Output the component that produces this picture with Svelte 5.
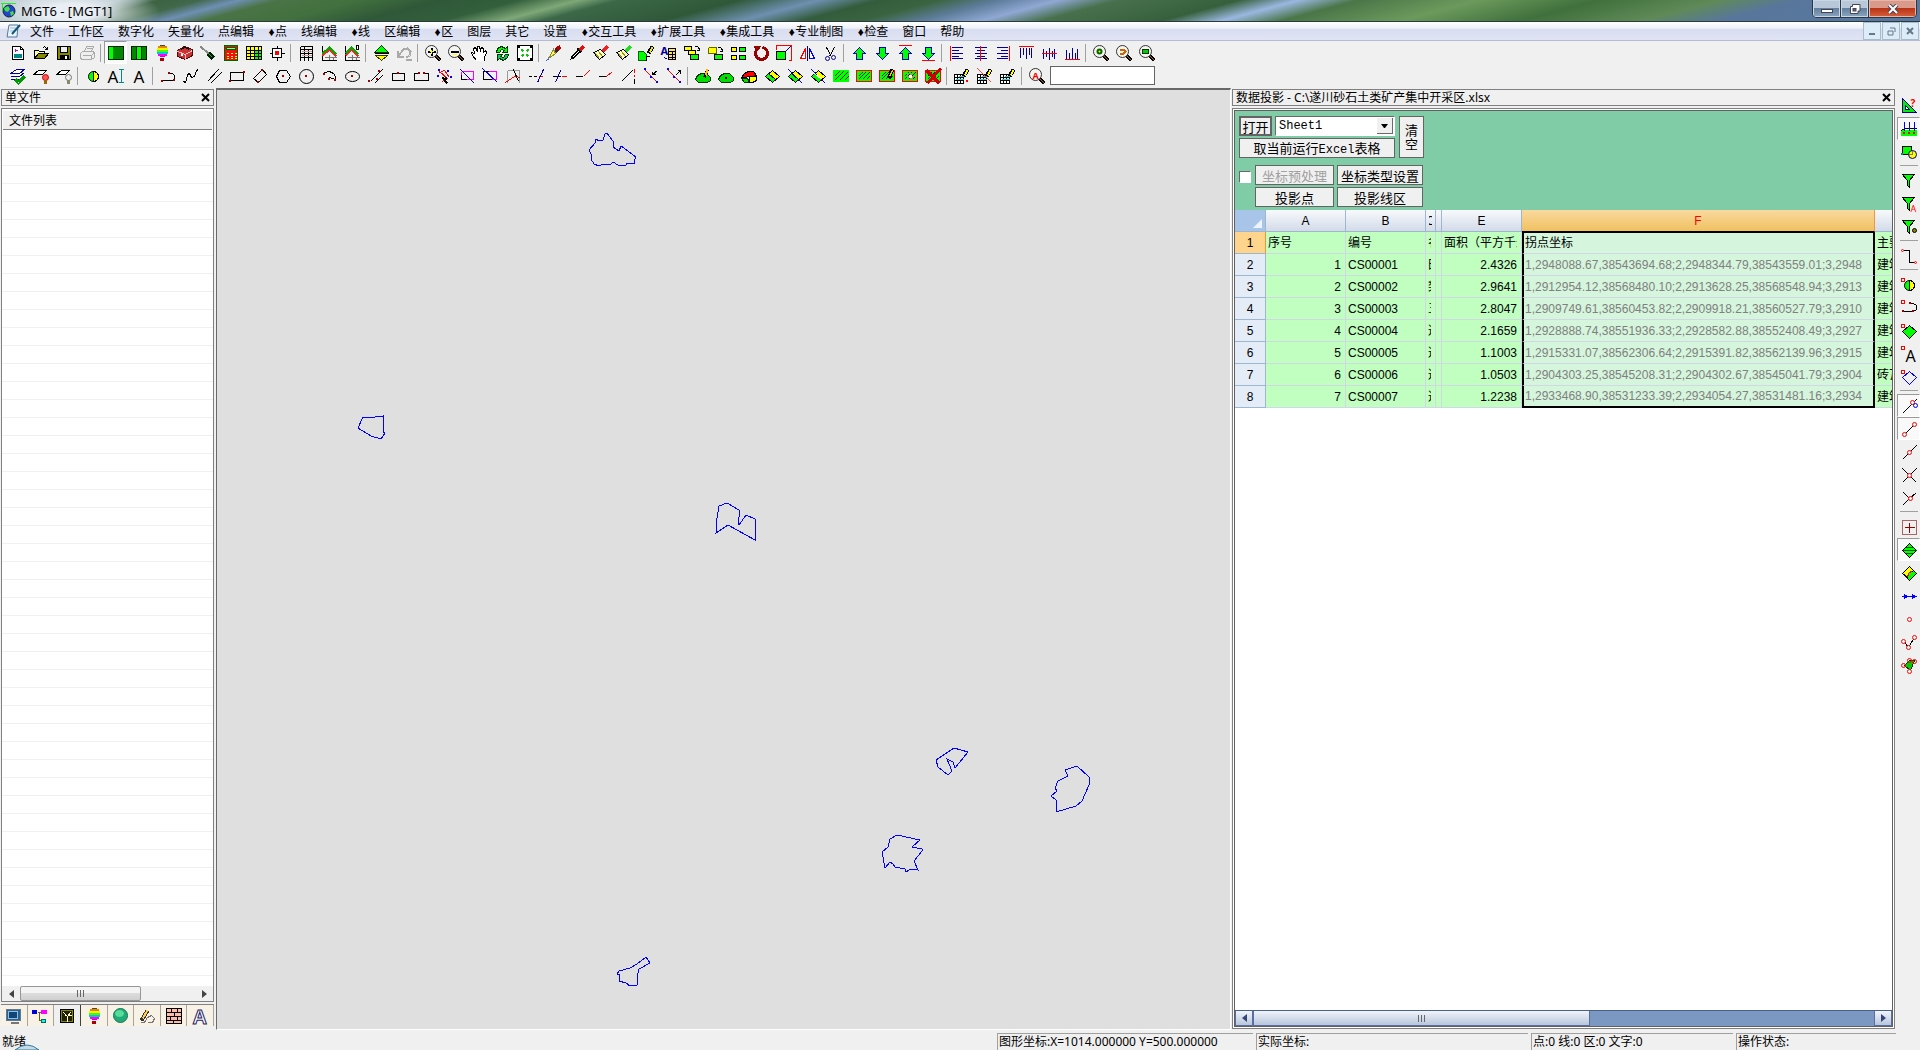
<script>
  const menus = [
    '文件', '工作区', '数字化', '矢量化', '点编辑', '♦点', '线编辑', '♦线', '区编辑', '♦区',
    '图层', '其它', '设置', '♦交互工具', '♦扩展工具', '♦集成工具', '♦专业制图', '♦检查', '窗口', '帮助',
  ];

  // small drawing helpers, every icon sits on a 16x16 pixel grid
  const p = (d, stroke = '#000', fill = 'none', w = 1) =>
    `<path d="${d}" stroke="${stroke}" fill="${fill}" stroke-width="${w}"/>`;
  const r = (x, y, w, h, fill, stroke = fill) =>
    `<rect x="${x}" y="${y}" width="${w}" height="${h}" fill="${fill}" stroke="${stroke}"/>`;
  const c = (x, y, rad, fill = 'none', stroke = '#000', w = 1) =>
    `<circle cx="${x}" cy="${y}" r="${rad}" fill="${fill}" stroke="${stroke}" stroke-width="${w}" shape-rendering="auto"/>`;
  const e = (x, y, rx, ry, fill = 'none', stroke = '#000') =>
    `<ellipse cx="${x}" cy="${y}" rx="${rx}" ry="${ry}" fill="${fill}" stroke="${stroke}" shape-rendering="auto"/>`;
  const t = (x, y, size, s, fill = '#000', weight = 400) =>
    `<text x="${x}" y="${y}" font-size="${size}" font-weight="${weight}" fill="${fill}" font-family="Noto Sans, sans-serif">${s}</text>`;
  const dot = (x, y, col = '#900') => r(x, y, 1, 1, col);
  const node = (x, y) => c(x, y, 2, '#fff', '#f00');

  const lens = p('M10 10L15 15', '#000', 'none', 4) + p('M10 10L15 15', '#a60', 'none', 1) + c(6, 6, 6, '#f4f4f0', '#333');
  const region = r(0, 2, 15, 11, '#0f0') + p('M1 8L6 3M1 12L10 3M6 12L14 4M11 12L15 8', '#030');
  const regionRed = r(0, 2, 15, 11, '#0f0', '#f00') + p('M2 8L6 4M2 11L9 4M6 11L13 4M10 11L13 8', '#030');
  const diamond = p('M1 8L8 1L15 8L8 15Z', '#000', '#0f0');
  const halfDiamond = p('M1 8L8 2L15 8L8 14Z', '#000', '#ff0') + p('M1 8L4 5L11 11L8 14Z', '#000', '#0f0');
  const blob = p('M0 11L2 7L6 5H11L15 9V12L12 14H3Z', '#030', '#0d0');
  const sheet = r(0, 6, 9, 9, '#fff', '#000') + p('M0 9H9M0 12H9M3 6V15M6 6V15') + p('M1 11H9M4 8H9', '#3cc');
  const pencil = p('M9 8L13 1', '#000', 'none', 4) + p('M10 7L13 2', '#ff0', 'none', 2);
  const funnel = p('M1 1H13L8 7V14L6 12V7Z', '#000', '#0f0');
  const brush = (col) => p('M10 6L15 1', col, 'none', 4) + p('M1 7L8 4L13 9L7 14Z', '#000', '#ffc') + p('M3 8L7 13M6 6L10 11', '#990');
  const up = p('M8 2L14 8H11V14H5V8H2Z', '#00c', '#0f0');
  const down = p('M8 14L14 8H11V2H5V8H2Z', '#00c', '#0f0');
  const balloon =
    p('M5 0H10', '#444') + p('M3 1.5H12', '#d80', 'none', 2) + p('M2 3.5H13', '#fe0', 'none', 2) +
    p('M2 5.5H13', '#4f0', 'none', 2) + p('M2 7.5H13', '#0cc', 'none', 2) + p('M3 9.5H12', '#f0f', 'none', 2) +
    p('M5 11H10', '#c0c') + r(6, 13, 3, 2, '#a00');

  const icons = {
    new: p('M2 1H10L13 4V14H2Z', '#000', '#fff') + r(4, 9, 7, 3, '#088') + p('M5 3V6M4 5H7', '#c0c') + p('M10 1V4H13'),
    open: p('M1 13V5H5L6 6H11V8', '#000', '#ffa') + p('M1 13L5 8H15L11 13Z', '#000', '#880') + p('M9 3L11 1L14 4M14 1V4H11'),
    save: r(1, 1, 13, 13, '#880', '#000') + r(4, 1, 7, 6, '#eee', '#000') + r(4, 10, 8, 4, '#000') + r(9, 11, 1, 2, '#fff'),
    print: p('M5 6L7 1H14L12 6M1 8L3 6H14L15 8V12L12 14H2L1 12ZM3 10H12M12 14V10L15 7M7 3H12', '#aaa', '#eee'),
    split1: r(0, 1, 15, 13, '#080', '#020') + r(1, 2, 3, 11, '#0f0'),
    split2: r(0, 1, 15, 13, '#080', '#020') + r(6, 2, 3, 11, '#0f0') + p('M5 1V14M10 1V14', '#020'),
    balloon,
    toolbox: p('M0 5L7 1L15 4V10L8 14L0 11Z', '#411', '#c33') + p('M0 6L8 9L15 5M8 9V14', '#fbb') + p('M4 4L7 2L12 4', '#000') + r(4, 9, 1, 1, '#fff'),
    driver: p('M0 1L8 8', '#888', 'none', 2) + p('M8 8L13 13', '#020', 'none', 5) + p('M8 8L12 12', '#394', 'none', 1),
    calc: r(1, 0, 13, 15, '#e11', '#060') + r(3, 2, 9, 2, '#8f8', '#060') + p('M3 8H5M7 8H9M11 8H13M3 11H5M7 11H9M11 11H13M3 13H5M7 13H9M11 13H13', '#ff0'),
    table: r(0, 1, 15, 13, '#ff0', '#000') + r(8, 5, 7, 9, '#0f0', '#000') + p('M0 5H15M0 8H15M0 11H15M4 1V14M8 1V14M12 1V14'),
    target: r(3, 3, 9, 9, '#fff', '#000') + r(6, 6, 3, 3, '#f00') + p('M8 0V3M8 12V15M0 8H3M12 8H15'),
    rows: p('M2 1V15M6 1V15M14 1V15M2 1H14M2 4H14M2 8H14M2 12H14M10 4V15', '#000') + p('M3 6H13M3 10H13', '#c99'),
    chart1: p('M1 0V15M1 15H15') + p('M3 12H15M8 9V14M12 12V14', '#777') + p('M1 10L8 4L15 11', '#f22', 'none', 2) + p('M1 8L8 2L15 9', '#0a0', 'none', 2),
    chart2: p('M1 0V15M1 15H15') + p('M3 12H15M8 9V14M12 12V14', '#777') + p('M1 10L7 4L14 11', '#f22', 'none', 2) + p('M1 8L7 2L14 9', '#0a0', 'none', 2) + r(12, 0, 2, 4, '#fff', '#000'),
    updown: p('M1 7L8 0L15 7Z', '#030', '#0f0') + p('M2 10L8 15L14 10Z', '#330', '#ff0') + p('M1 8H15'),
    undo: p('M1 5V11H7M2 10L7 4L11 3L14 6L13 10L10 12M9 14H15', '#aaa', 'none', 2),
    zoomin: lens + p('M6 2V10M2 6H10', '#000', 'none', 2) + p('M6 4V8M4 6H8', '#ff0'),
    zoomout: lens + p('M2 6H10', '#000', 'none', 2) + p('M4 9H8', '#ff0'),
    hand: p('M5 15L1 10L0 7L3 8L2 3L4 2L6 6L6 1H8L9 5L10 2L12 3V7L14 5L15 7L13 12V15', '#000', '#fff'),
    refresh: p('M2 7L3 3L7 1L11 3L13 1V7H8L10 5L7 4L5 7Z', '#030', '#0f0') + p('M14 9L13 12L9 15L5 13L3 15V9H8L6 11L9 12L11 9Z', '#030', '#0c6'),
    extent: r(0, 0, 15, 15, '#fff', '#000') + r(0, 0, 2, 2, '#000') + r(13, 0, 2, 2, '#000') + r(0, 13, 2, 2, '#000') + r(13, 13, 2, 2, '#000') + p('M4 4L6 6M11 4L9 6M4 11L6 9M11 11L9 9', '#0c0', 'none', 2),
    pen: p('M9 5L14 1', '#b00', 'none', 4) + p('M7 8L11 4', '#422', 'none', 3) + p('M2 13L7 4L9 8Z', '#884', '#ff3') + p('M0 15L3 13', '#26f'),
    picker: p('M2 13L9 6', '#000', 'none', 3) + p('M3 12L9 6', '#fff') + p('M8 3L12 7', '#000', 'none', 2) + p('M10 5L14 1', '#d11', 'none', 4) + p('M0 15L2 13'),
    brush1: brush('#e22'),
    brush2: brush('#2d2'),
    editarea: p('M0 6H5L8 9V15H0Z', '#060', '#0f0') + p('M10 8L14 1', '#000', 'none', 4) + p('M11 7L14 2', '#ee0', 'none', 2) + p('M8 15V11H11'),
    attr: t(-1, 9, 11, 'A', '#009', 700) + r(7, 3, 7, 11, '#fd6', '#000') + p('M7 6H14M7 9H14M7 12H14M11 6V14') + p('M3 12L6 14', '#009'),
    copy: r(0, 1, 7, 4, '#ff0', '#000') + r(4, 5, 7, 4, '#ff0', '#000') + r(6, 9, 8, 5, '#0f0', '#000') + p('M10 1H13L15 4M15 2V5H12', '#000'),
    move: r(1, 2, 8, 6, '#ff0', '#ff0') + p('M1 2H9M1 8H9M1 2V8M9 2V8', '#660') + r(7, 9, 8, 5, '#0f0', '#000') + p('M10 2H13L15 5M15 3V6H12'),
    tiles: r(1, 2, 5, 4, '#ff0', '#000') + r(9, 2, 6, 4, '#0f0', '#000') + r(1, 10, 5, 4, '#ff0', '#000') + r(9, 10, 6, 4, '#0f0', '#000'),
    rotate: `<circle cx="8" cy="8" r="6" fill="none" stroke="#900" stroke-width="3" stroke-dasharray="31 7" stroke-dashoffset="-2" transform="rotate(-100 8 8)"/>` + p('M1 1L7 1L3 6Z', '#900', '#900'),
    scale: p('M0 4V0H15V15H12', '#f00') + r(0, 6, 9, 8, '#0f0', '#000') + p('M9 6L14 1', '#009'),
    mirror: p('M6 3V13H1Z', '#f00', '#fff') + p('M8 0V15', '#009') + p('M10 3V13H15Z', '#00f', '#fff'),
    cut: p('M4 2L9 11M12 2L7 11') + c(5, 13, 2, 'none', '#009', 1) + c(11, 12, 2, 'none', '#009', 1),
    up, down,
    top: p('M1 0H14', '#f00') + up,
    bottom: down + p('M1 15H14', '#f00'),
    alignl: p('M1 0V15', '#f00') + p('M2 2H13M2 5H9M2 8H13M2 11H9M2 13H13', '#009'),
    alignc: p('M2 2H14M4 5H12M2 8H14M4 11H12M2 13H14', '#009') + p('M8 0V15', '#f00'),
    alignr: p('M1 2H12M5 5H12M1 8H12M5 11H12M1 13H12', '#009') + p('M14 0V15', '#f00'),
    alignt: p('M2 2V12M5 2V9M8 2V13M11 2V9M13 2V12', '#009') + p('M0 1H15', '#f00'),
    alignm: p('M2 3V13M5 5V11M8 2V14M11 5V11M13 3V13', '#009') + p('M0 8H15', '#f00'),
    alignb: p('M2 4V13M5 7V13M8 2V13M11 7V13M13 3V13', '#009') + p('M0 14H15', '#f00'),
    find1: lens + c(6, 6, 2, '#ff0', '#060', 2),
    find2: lens + p('M3 8H7L9 6L7 4H3', '#c60', 'none', 2),
    find3: lens + r(3, 4, 6, 4, '#0c0', '#030'),
    layers: p('M0 5L6 1H14L9 5ZM0 8L9 8L14 4M0 11L9 11L14 7', '#009', '#fff') + p('M5 11L8 14L14 8', '#090', 'none', 3),
    lampOn: p('M0 6L5 2H13L9 6Z', '#000', '#fff') + c(12, 9, 3, '#f55', '#c00') + r(11, 12, 2, 3, '#960'),
    lampOff: p('M0 6L5 2H13L9 6Z', '#000', '#fff') + c(12, 9, 3, '#eee', '#777') + r(11, 12, 2, 3, '#886'),
    pt: c(8, 8, 5, '#0f0') + p('M8 3A5 5 0 0 1 8 13Z', '#000', '#ff0'),
    textI: t(-1, 14, 17, 'A') + p('M10 1H15M13 1V14M10 14H15', '#088'),
    text: t(2, 14, 17, 'A'),
    line1: p('M1 12H12L14 10V7L12 5H8') + dot(1, 12) + dot(8, 4) + dot(13, 11),
    curve: p('M0 13L2 14L3 11L4 6L6 5L8 9L11 8L13 2L15 1'),
    parallel: p('M1 13L12 1M4 15L15 4'),
    rect: r(1, 4, 13, 8, 'none', '#000') + dot(0, 12) + dot(14, 3),
    rect2: p('M1 10L10 1L14 6L6 14Z') + dot(9, 1) + dot(5, 13),
    hexa: p('M4 2H11L15 8L11 14H4L1 8Z') + dot(7, 7),
    circ: c(8, 8, 7) + dot(7, 7),
    arc: p('M1 7L3 4L8 3L12 5L14 8V11L8 9') + dot(2, 5) + dot(7, 10) + dot(13, 11),
    ellip: e(8, 8, 7, 5) + dot(7, 7),
    par2: p('M3 13L15 1M7 15L15 7', '#000') + dot(1, 12) + dot(9, 10) + dot(11, 2),
    box1: r(2, 5, 12, 7, 'none', '#000') + dot(7, 4),
    box2: p('M6 5H1V12H15V5H10') + dot(5, 4) + dot(10, 4),
    snap: p('M3 4L8 2L13 9M3 3L11 10L6 13', '#f00') + r(2, 1, 1, 1, '#00f') + r(11, 2, 1, 1, '#00f') + r(1, 7, 1, 1, '#00f') + r(14, 8, 1, 1, '#00f') + p('M6 9L11 15M10 9L8 14', '#000', 'none', 2),
    clip1: p('M2 3H14V11H7M2 3V6', '#f0f') + p('M2 11V6M2 11H7', '#000') + p('M1 1L15 15', '#00c'),
    clip2: p('M14 3V11H9M6 3H14', '#f0f') + p('M6 3H1V11H9') + p('M0 0L15 14', '#00c'),
    trim: p('M2 2H14M2 2V14M14 2V14', '#999') + p('M0 14L9 8L15 9', '#f00') + p('M8 1L13 13'),
    ext1: p('M0 8H3M5 8H8', '#000') + p('M10 8H14', '#f00') + p('M15 1L9 14', '#009'),
    ext2: p('M1 8H9') + p('M10 8H15', '#f00') + p('M9 2L4 14', '#009'),
    bend1: p('M1 8H8') + p('M9 8L15 2', '#f00'),
    bend2: p('M1 8H8') + p('M9 8L15 3', '#f00'),
    corner: p('M1 13L12 2') + p('M14 0V4M14 6V8', '#f00') + p('M14 10V15'),
    node1: p('M1 1L14 14', '#f00') + r(1, 0, 1, 1, '#00f') + r(13, 13, 1, 1, '#00f') + r(7, 8, 1, 1, '#00f') + p('M14 2L9 6M9 3V6H12'),
    node2: p('M1 1L14 14', '#f00') + r(1, 0, 1, 1, '#00f') + r(13, 13, 1, 1, '#00f') + r(7, 8, 1, 1, '#00f') + p('M9 7L14 2M11 2H14V5'),
    blob1: blob + p('M9 9L12 1', '#000', 'none', 3) + p('M10 7L12 1', '#fb0', 'none', 2),
    blob2: blob + dot(7, 9, '#000'),
    blob3: p('M0 9L3 5L7 3H12L15 7L11 8Z', '#000', '#f00') + p('M0 10H6L8 14H3Z', '#030', '#0d0') + p('M8 8H15V12L11 14H8Z', '#000', '#ff0'),
    dia1: halfDiamond,
    dia2: halfDiamond + p('M1 1L15 15', '#00c'),
    dia3: halfDiamond + p('M1 1L15 15', '#00c') + p('M4 5L11 11', '#fff'),
    reg1: region,
    reg2: regionRed,
    reg3: regionRed + p('M9 10L13 1', '#000', 'none', 4) + p('M10 8L13 2', '#fb0', 'none', 1),
    reg4: regionRed + p('M4 8H13M8 4V12M5 5L11 11M11 5L5 11', '#f66') + r(7, 7, 2, 2, '#fff'),
    reg5: regionRed + p('M1 2L14 15M15 0L2 15', '#c00', 'none', 3),
    sheet1: sheet + pencil + r(12, 12, 1, 1, '#f00'),
    sheet2: sheet + pencil + p('M0 0L14 14', '#f44'),
    sheet3: sheet + pencil,
    findA: lens + t(3, 10, 9, 'A', '#f00', 700),
    tri: p('M1 0V14H15Z', '#009', '#0e0') + p('M4 7V11H8Z', '#009', '#fff') + t(9, 8, 10, '?', '#f00', 700),
    plumb: r(0, 9, 15, 5, '#0f0') + p('M0 9L3 7H15') + p('M3 0V9M8 0V9M13 0V9', '#00f', 'none', 1) + r(2, 11, 1, 1, '#fff', '#f00') + r(7, 11, 1, 1, '#fff', '#f00') + r(12, 11, 1, 1, '#fff', '#f00'),
    overlap: r(1, 2, 9, 8, '#0f0', '#000') + c(11, 10, 4, '#ff0', '#009') + r(0, 9, 1, 1, '#088') + p('M11 6V10H7', '#880'),
    funnel,
    funnelA: funnel + t(9, 15, 9, 'A', '#f00'),
    funnelP: funnel + c(13, 11, 2, '#880'),
    step: p('M2 2H8V14H14') + c(1, 2, 1, '#fff', '#f00') + c(14, 14, 1, '#fff', '#f00'),
    selPt: c(8, 8, 5, '#0f0') + p('M8 3A5 5 0 0 1 8 13Z', '#000', '#ff0') + r(0, 1, 3, 3, '#fff', '#f00'),
    selLine: r(0, 0, 3, 3, '#fff', '#f00') + p('M1 11H12L15 9V5L12 3H8') + dot(1, 10) + dot(8, 2) + dot(11, 10),
    selArea: p('M1 8L8 2L15 8L8 15Z', '#000', '#0f0') + r(0, 1, 3, 3, '#fff', '#f00'),
    selText: t(4, 15, 16, 'A') + r(0, 0, 3, 3, '#fff', '#f00'),
    selDia: p('M1 8L8 2L15 8L8 15Z', '#00f') + r(0, 1, 3, 3, '#fff', '#f00'),
    s1: p('M1 15L15 1') + node(11, 4) + c(14, 7, 2, 'none', '#00f'),
    s2: p('M3 13L13 3') + node(3, 13) + node(13, 3),
    s3: p('M1 15L15 1') + node(8, 8),
    s4: p('M1 1L15 15M15 1L1 15') + node(8, 8),
    s5: p('M2 2L8 8L15 2M8 8L1 15') + node(9, 8),
    grid: r(1, 1, 14, 14, 'none', '#a66') + p('M8 3V13M3 8H13', '#900'),
    areaOn: diamond + p('M4 5H12M1 8H15M4 11H12', '#050'),
    areaHalf: diamond + p('M1 8L8 1L12 5L7 8L6 12Z', '#000', '#ff0') + p('M11 5L7 8L6 12', '#f00'),
    arrows: p('M0 8H15', '#00f', 'none', 1) + p('M3 6L6 8L3 10ZM11 6L14 8L11 10Z', '#00f', '#00f'),
    single: c(8, 8, 2, '#fff', '#f00'),
    vee: p('M2 6L7 13L13 3') + node(2, 7) + node(7, 13) + node(13, 3),
    poly: p('M3 8L8 3H13L9 13Z', '#030', '#0c0') + c(2, 8, 2, 'none', '#f00') + c(8, 3, 2, 'none', '#f00') + c(13, 4, 2, 'none', '#f00') + c(8, 14, 2, '#fff', '#f00'),
    pc: r(0, 1, 14, 11, '#269', '#678') + r(2, 3, 9, 7, '#147', '#9bd') + r(5, 14, 7, 1, '#bbb', '#777'),
    tree: r(0, 2, 4, 3, '#00d') + r(9, 2, 5, 3, '#f0f') + r(9, 11, 4, 3, '#0ff', '#066') + p('M5 4H8M7 4V12H9', '#660'),
    map: r(1, 1, 13, 13, '#880', '#000') + r(3, 3, 9, 9, '#220') + p('M4 4L7 7M8 13V8L11 4M5 7H7M9 7H12', '#ffd', 'none', 1),
    ball: c(8, 7, 7, '#2a7', '#175') + e(7, 5, 4, 3, '#5d9', '#5d9'),
    draw: p('M2 12L8 2', '#333', 'none', 4) + p('M3 10L8 2', '#fc5', 'none', 2) + p('M1 14H5L8 9L12 7L15 10L13 14H8', '#777'),
    brick: r(0, 0, 15, 15, '#fba', '#000') + p('M0 4H15M0 8H15M0 12H15M5 0V4M11 0V4M8 4V8M4 8V12M11 8V12M7 12V15'),
    bigA: `<text x="0" y="15" font-size="20" font-weight="700" fill="#fff" stroke="#226" font-family="Liberation Sans, sans-serif">A</text>`,
  };

  const mainTools = `new open save print | split1 split2 balloon toolbox driver calc table target | rows chart1 chart2 |
    updown undo | zoomin zoomout hand refresh extent | pen picker brush1 brush2 editarea attr copy move tiles rotate scale
    mirror cut | up down top bottom | alignl alignc alignr alignt alignm alignb | find1 find2 find3`.split(/\s+/);
  const editTools = `layers lampOn lampOff | pt textI text | line1 curve parallel rect rect2 hexa circ arc ellip par2 box1
    box2 snap clip1 clip2 trim ext1 ext2 bend1 bend2 corner node1 node2 | blob1 blob2 blob3 dia1 dia2 dia3 reg1 reg2 reg3
    reg4 reg5 | sheet1 sheet2 sheet3 | findA`.split(/\s+/);
  const sideTools = `tri plumb overlap | funnel funnelA funnelP | step | selPt selLine selArea selText selDia |
    s1 s2 s3 s4 s5 | grid areaOn areaHalf arrows single vee poly`.split(/\s+/);
  const pressed = ['split1', 'plumb', 's1', 's2', 'areaOn'];
  const tabs = ['pc', 'tree', 'map', 'balloon', 'ball', 'draw', 'brick', 'bigA'];

  const parcels = [
    '372,60 378,53 379,49 382,51 386,50 388,44 390,43 396,51 396,57 402,61 404,56 419,67 418,69 417,74 410,73 409,75 401,75 396,72 394,74 389,75 386,74 382,76 377,74 374,69 374,64',
    '141,338 146,327 158,327 166,326 166,333 166,342 168,343 164,349 154,346',
    '499,443 500,428 502,416 510,413 522,420 522,427 521,433 522,435 529,425 538,429 538,450 511,435',
    '719,670 737,658 751,662 738,678 736,672 730,669 735,681 731,685 721,677',
    '848,680 860,676 872,687 872,695 865,711 859,716 839,722 839,710 834,706 840,701 838,698 841,691 851,686',
    '665,762 671,757 673,749 680,745 703,750 695,757 705,759 705,761 697,771 701,780 694,779 689,782 688,779 678,777 676,774 673,772 668,778',
    '429,867 433,873 422,879 420,887 420,895 413,896 409,893 402,891 403,885 400,884 402,881 413,878 420,874',
  ];

  const rows = [
    [1, 'CS00001', '田', '2.4326', '1,2948088.67,38543694.68;2,2948344.79,38543559.01;3,2948', '建筑'],
    [2, 'CS00002', '梨', '2.9641', '1,2912954.12,38568480.10;2,2913628.25,38568548.94;3,2913', '建筑'],
    [3, 'CS00003', '五', '2.8047', '1,2909749.61,38560453.82;2,2909918.21,38560527.79;3,2910', '建筑'],
    [4, 'CS00004', '遂', '2.1659', '1,2928888.74,38551936.33;2,2928582.88,38552408.49;3,2927', '建筑'],
    [5, 'CS00005', '遂', '1.1003', '1,2915331.07,38562306.64;2,2915391.82,38562139.96;3,2915', '建筑'],
    [6, 'CS00006', '遂', '1.0503', '1,2904303.25,38545208.31;2,2904302.67,38545041.79;3,2904', '砖瓦'],
    [7, 'CS00007', '遂', '1.2238', '1,2933468.90,38531233.39;2,2934054.27,38531481.16;3,2934', '建筑'],
  ];

  const status = ['图形坐标:X=1014.000000 Y=500.000000', '实际坐标:', '点:0 线:0 区:0 文字:0', '操作状态:'];

  let sheetName = $state('Sheet1');
  let preprocess = $state(false);
  let search = $state('');
  let activeTab = $state('map');
</script>

{#snippet icon(name)}
  <svg class="icon" viewBox="-0.5 -0.5 16 16" shape-rendering="crispEdges" aria-hidden="true">{@html icons[name]}</svg>
{/snippet}

{#snippet tools(list)}
  {#each list as name}
    {#if name === '|'}
      <span class="sep"></span>
    {:else}
      <button class="tool" class:pressed={pressed.includes(name)} aria-label={name}>{@render icon(name)}</button>
    {/if}
  {/each}
{/snippet}

<div class="window">
  <header class="titlebar">
    <svg class="logo" viewBox="0 0 16 16" aria-hidden="true">
      <circle cx="8" cy="8" r="6" fill="#24c" stroke="#124" />
      <path d="M3 5L7 3L9 6L7 9L4 8ZM9 9L12 8L13 11L10 13Z" fill="#4d4" />
      <path d="M0 0.5H15M1.5 0V8" stroke="#2e2" />
    </svg>
    <h1>MGT6 - [MGT1]</h1>
    <div class="caption">
      <button aria-label="最小化"><svg viewBox="0 0 12 10"><rect x="0.5" y="5.5" width="11" height="3" fill="#fff" stroke="#445" /></svg></button>
      <button aria-label="还原"><svg viewBox="0 0 12 10"><path d="M3.5 0.5H11V7H9V9.5H1.5V2.5H3.5Z" fill="#fff" stroke="#445" /><rect x="4" y="4.5" width="3" height="2.5" fill="#567" stroke="#445" /></svg></button>
      <button class="close" aria-label="关闭"><svg viewBox="0 0 12 10"><path d="M2 1L10 9M10 1L2 9" stroke="#445" stroke-width="4" /><path d="M2 1L10 9M10 1L2 9" stroke="#fff" stroke-width="2" /></svg></button>
    </div>
  </header>

  <nav class="menubar">
    <svg class="doc" viewBox="0 0 16 16" aria-hidden="true">
      <path d="M3 2H12L11 14H1Z" fill="#e8f4fc" stroke="#579" />
      <path d="M4 5H10M4 8H9" stroke="#9bd" />
      <path d="M6 11L14 2" stroke="#157" stroke-width="2" />
    </svg>
    {#each menus as menu}
      <button>
        {#if menu.startsWith('♦')}<span class="mark">♦</span>{/if}{menu.replace('♦', '')}
      </button>
    {/each}
    <div class="mdi">
      <button aria-label="最小化窗口"><svg viewBox="0 0 9 9"><path d="M1 7H7" stroke="#678" stroke-width="2" /></svg></button>
      <button aria-label="还原窗口"><svg viewBox="0 0 9 9"><path d="M3 1H8V5M1 4H6V8H1Z" stroke="#678" fill="none" /></svg></button>
      <button aria-label="关闭窗口"><svg viewBox="0 0 9 9"><path d="M1 1L7 7M7 1L1 7" stroke="#678" stroke-width="2" /></svg></button>
    </div>
  </nav>

  <div class="toolbars">
    <div class="toolbar">{@render tools(mainTools)}</div>
    <div class="toolbar">
      {@render tools(editTools)}
      <input class="search" type="text" aria-label="查找" bind:value={search} />
    </div>
  </div>

  <main>
    <aside class="files">
      <div class="pane-title">
        <span>单文件</span>
        <button aria-label="关闭面板"><svg viewBox="0 0 9 9"><path d="M1 1L8 8M8 1L1 8" stroke="#000" stroke-width="2" /></svg></button>
      </div>
      <div class="filebox">
        <div class="filehead">文件列表</div>
        <div class="filelist"></div>
        <div class="hscroll">
          <button aria-label="向左"><svg viewBox="0 0 5 8"><path d="M5 0L0 4L5 8Z" fill="#444" /></svg></button>
          <div class="track"><div class="thumb"><i></i><i></i><i></i></div></div>
          <button aria-label="向右"><svg viewBox="0 0 5 8"><path d="M0 0L5 4L0 8Z" fill="#444" /></svg></button>
        </div>
      </div>
      <div class="tabs">
        {#each tabs as tab}
          <button class:active={activeTab === tab} aria-label={tab} onclick={() => (activeTab = tab)}>{@render icon(tab)}</button>
        {/each}
      </div>
    </aside>

    <section class="canvas">
      <svg class="map" shape-rendering="crispEdges" aria-hidden="true">
        {#each parcels as points}
          <polygon {points} />
        {/each}
      </svg>
    </section>

    <aside class="data">
      <div class="pane-title">
        <span>数据投影 - C:\遂川砂石土类矿产集中开采区.xlsx</span>
        <button aria-label="关闭面板"><svg viewBox="0 0 9 9"><path d="M1 1L8 8M8 1L1 8" stroke="#000" stroke-width="2" /></svg></button>
      </div>
      <div class="databox">
        <div class="form">
          <div class="group">
            <div class="source">
              <div class="line">
                <button class="btn open">打开</button>
                <div class="combo">
                  <select aria-label="工作表" bind:value={sheetName}>
                    <option>Sheet1</option>
                  </select>
                  <span class="drop"><svg viewBox="0 0 7 4"><path d="M0 0H7L4 4H3Z" /></svg></span>
                </div>
              </div>
              <button class="btn">取当前运行<span class="latin">Excel</span>表格</button>
            </div>
            <button class="btn clear">清空</button>
          </div>
          <div class="group">
            <input type="checkbox" aria-label="坐标预处理" bind:checked={preprocess} />
            <div class="pairs">
              <button class="btn" disabled={!preprocess}>坐标预处理</button>
              <button class="btn">坐标类型设置</button>
              <button class="btn">投影点</button>
              <button class="btn">投影线区</button>
            </div>
          </div>
        </div>

        <div class="sheet">
          <table>
            <colgroup>
              <col class="w-row" /><col class="w-std" /><col class="w-std" /><col class="w-c" /><col class="w-d" />
              <col class="w-std" /><col class="w-f" /><col class="w-std" />
            </colgroup>
            <thead>
              <tr>
                <th class="all"><svg viewBox="0 0 9 9"><path d="M9 0V9H0Z" fill="#eef4fb" /></svg></th>
                <th>A</th><th>B</th><th><div class="mid">C</div></th><th></th><th>E</th><th class="sel">F</th><th></th>
              </tr>
            </thead>
            <tbody>
              <tr>
                <th class="sel">1</th>
                <td>序号</td>
                <td>编号</td>
                <td><div>名</div></td>
                <td></td>
                <td><div>面积（平方千米</div></td>
                <td class="f first">拐点坐标</td>
                <td>主要</td>
              </tr>
              {#each rows as row, i}
                <tr>
                  <th>{i + 2}</th>
                  <td class="num">{row[0]}</td>
                  <td>{row[1]}</td>
                  <td><div>{row[2]}</div></td>
                  <td></td>
                  <td class="num">{row[3]}</td>
                  <td class="f coords" class:last={i === rows.length - 1}>{row[4]}</td>
                  <td>{row[5]}</td>
                </tr>
              {/each}
            </tbody>
          </table>
        </div>

        <div class="hscroll blue">
          <button aria-label="向左"><svg viewBox="0 0 5 8"><path d="M5 0L0 4L5 8Z" fill="#347" /></svg></button>
          <div class="track"><div class="thumb"><i></i><i></i><i></i></div></div>
          <button aria-label="向右"><svg viewBox="0 0 5 8"><path d="M0 0L5 4L0 8Z" fill="#347" /></svg></button>
        </div>
      </div>
    </aside>

    <div class="side">{@render tools(sideTools)}</div>
  </main>

  <footer class="status">
    <span class="ready">就绪</span>
    {#each status as item}
      <span class="cell">{item}</span>
    {/each}
    <svg class="orb" viewBox="0 0 26 6" aria-hidden="true">
      <path d="M1 6Q13 -4 25 6Z" fill="#c4dbe6" stroke="#357a9e" />
    </svg>
  </footer>
</div>

<style>
  :global(body) {
    background: #f0f0f0;
  }

  .window {
    display: flex;
    flex-direction: column;
    min-height: 100vh;
    overflow: hidden;
    background: #f0f0f0;
    color: #000;
    font-family: 'Noto Sans', 'Noto Sans CJK SC', sans-serif;
    font-size: 12px;
    line-height: 16px;
  }

  button {
    padding: 0;
    border: none;
    background: none;
    color: inherit;
    font: inherit;
  }

  svg {
    display: block;
  }

  .titlebar {
    display: flex;
    align-items: center;
    height: 21px;
    border-bottom: 1px solid #2c3a40;
    background:
      radial-gradient(ellipse 90px 26px at 70px 12px, #e8eef4 30%, transparent 100%),
      linear-gradient(165deg, #b4c4cc 0, #a4b8bc 6%, #3c6242 8%, #41684a 10%, #6f8fb4 12%, #4a7446 14%, #42703e 18%,
        #2f5838 22%, #335f3c 26%, #7fa878 29%, #3c6848 31%, #2f5838 37%, #6e90b0 41%, #335c3c 44%, #3a6440 47%,
        #5d7c9a 50%, #8fa8d4 53%, #48704c 56%, #36603c 62%, #9ab7e0 65%, #4a7648 68%, #6c9a5c 74%, #40703c 80%,
        #5f8a58 86%, #58769c 90%, #5878a0 100%);
  }

  .logo {
    width: 16px;
    height: 16px;
    margin: 0 4px 0 1px;
  }

  h1 {
    margin: 0;
    font-size: 13px;
    font-weight: 400;
    line-height: 20px;
  }

  .caption {
    display: flex;
    align-self: flex-start;
    height: 17px;
    margin: 0 3px 0 auto;
    border: 1px solid #2a3744;
    border-top: none;
    border-radius: 0 0 5px 5px;
    overflow: hidden;
  }

  .caption button {
    display: flex;
    align-items: center;
    justify-content: center;
    width: 28px;
    border-right: 1px solid #2a3744;
    background: linear-gradient(#b9c8d8 0 45%, #64809f 50%, #8ba5c0);
    box-shadow: inset 0 0 0 1px #c8d6e6;
  }

  .caption .close {
    width: 47px;
    border-right: none;
    background: linear-gradient(#d99a8c 0 45%, #b83418 50%, #d8603c);
    box-shadow: inset 0 0 0 1px #e8b4a8;
  }

  .caption svg {
    width: 12px;
    height: 10px;
  }

  .menubar {
    display: flex;
    align-items: center;
    gap: 14px;
    height: 18px;
    padding-right: 1px;
    border-bottom: 1px solid #b4bdd4;
    background: linear-gradient(#fff 0, #eef1f8 35%, #d8ddf0 40%, #e0e4f4 100%);
  }

  .doc {
    width: 16px;
    height: 16px;
    margin-left: 6px;
    margin-right: -6px;
  }

  .menubar > button {
    padding-top: 2px;
    font-family: 'Liberation Sans', 'Noto Sans CJK SC', sans-serif;
    white-space: nowrap;
  }

  .mark {
    display: inline-block;
    width: 7px;
  }

  .mdi {
    display: flex;
    gap: 1px;
    margin-left: auto;
  }

  .mdi button {
    display: flex;
    align-items: center;
    justify-content: center;
    width: 18px;
    height: 18px;
    border: 1px solid #a8bccc;
    background: #dcecf8;
  }

  .mdi svg {
    width: 9px;
    height: 9px;
  }

  .toolbars {
    padding: 0 0 1px 6px;
  }

  .toolbar {
    display: flex;
    align-items: center;
    height: 23px;
  }

  .tool {
    display: flex;
    flex: none;
    align-items: center;
    justify-content: center;
    width: 23px;
    height: 23px;
  }

  .pressed {
    border: 1px solid;
    border-color: #999 #fff #fff #999;
    background: #f9f9f9;
  }

  .icon {
    flex: none;
    width: 16px;
    height: 16px;
    overflow: visible;
  }

  .sep {
    flex: none;
    width: 1px;
    height: 18px;
    margin: 0 3px 0 2px;
    background: #a0a0a0;
  }

  .search {
    box-sizing: border-box;
    width: 105px;
    height: 19px;
    margin-left: 2px;
    border: 1px solid #646464;
    background: #fff;
    font: inherit;
  }

  main {
    display: flex;
    flex: 1;
    min-height: 0;
  }

  .files {
    display: flex;
    flex-direction: column;
    width: 213px;
    padding: 1px 2px 4px 1px;
  }

  .pane-title {
    display: flex;
    align-items: center;
    justify-content: space-between;
    height: 15px;
    padding: 0 3px;
    border: 1px solid #808080;
    line-height: 15px;
    white-space: nowrap;
  }

  .pane-title svg {
    width: 9px;
    height: 9px;
  }

  .filebox {
    display: flex;
    flex: 1;
    flex-direction: column;
    margin-top: 2px;
    border: 1px solid #808080;
    background: #fff;
  }

  .filehead {
    height: 18px;
    margin: 2px 1px 0;
    padding-left: 6px;
    border-bottom: 1px solid #808080;
    background: #f0f0f0;
    line-height: 20px;
  }

  .filelist {
    flex: 1;
    background: repeating-linear-gradient(#fff 0 17px, #f0f0f0 17px 18px);
  }

  .hscroll {
    display: flex;
    height: 15px;
    background: #f0f0f0;
  }

  .hscroll button {
    display: flex;
    flex: none;
    align-items: center;
    justify-content: center;
    width: 18px;
  }

  .hscroll button svg {
    width: 5px;
    height: 8px;
  }

  .track {
    display: flex;
    flex: 1;
  }

  .thumb {
    display: flex;
    align-items: center;
    justify-content: center;
    gap: 2px;
    width: 68%;
    border: 1px solid #979797;
    border-radius: 2px;
    background: linear-gradient(#f4f4f4 0 45%, #dcdcdc 50%, #cfcfcf);
  }

  .thumb i {
    width: 1px;
    height: 7px;
    background: #666;
  }

  .tabs {
    display: flex;
    margin-top: 2px;
    border-top: 1px solid #808080;
    background: #f8f2e6;
  }

  .tabs button {
    display: flex;
    flex: 1;
    align-items: center;
    justify-content: center;
    height: 21px;
    border-right: 1px solid #a8a49c;
  }

  .tabs .active {
    background: #f0f0f0;
    border-right-color: #404040;
  }

  .canvas {
    flex: 1;
    min-width: 0;
    border: solid;
    border-width: 2px 1px 1px;
    border-color: #696969 #fff #fff #696969;
    background: #dfdfdf;
  }

  .map {
    width: 100%;
    height: 100%;
  }

  .map polygon {
    fill: none;
    stroke: #00f;
  }

  .data {
    display: flex;
    flex-direction: column;
    width: 663px;
    padding: 1px 0 1px 1px;
  }

  .databox {
    display: flex;
    flex: 1;
    flex-direction: column;
    margin-top: 2px;
    padding: 2px;
    border: 1px solid #808080;
    outline: 1px solid #606060;
    outline-offset: -3px;
    background: #fff;
  }

  .form {
    display: flex;
    flex-direction: column;
    gap: 7px;
    height: 94px;
    padding: 5px 0 0 4px;
    background: #80cca6;
    font-family: 'Noto Sans CJK SC', sans-serif;
    font-size: 13px;
  }

  .group {
    display: flex;
    align-items: flex-start;
    gap: 4px;
  }

  .source {
    display: flex;
    flex-direction: column;
    gap: 2px;
    width: 156px;
  }

  .line {
    display: flex;
    gap: 3px;
  }

  .btn {
    box-sizing: border-box;
    height: 20px;
    border: 1px solid #646464;
    background: #f0f0f0;
    line-height: 17px;
    white-space: nowrap;
  }

  .btn:disabled {
    color: #a0a0a0;
  }

  .open {
    width: 33px;
    border-width: 2px;
    line-height: 15px;
  }

  .clear {
    width: 25px;
    height: 42px;
    padding: 0 5px;
    line-height: 14px;
    white-space: normal;
  }

  .latin,
  .combo select {
    font-family: 'Liberation Mono', monospace;
    font-size: 12px;
  }

  .latin {
    line-height: 14px;
  }

  .combo {
    position: relative;
    flex: 1;
  }

  .combo select {
    display: block;
    width: 100%;
    height: 20px;
    padding: 0 3px;
    border: 1px solid;
    border-color: #696969 #fff #fff #696969;
    border-radius: 0;
    background: #fff;
    appearance: none;
  }

  .drop {
    position: absolute;
    top: 2px;
    right: 2px;
    display: flex;
    align-items: center;
    justify-content: center;
    width: 15px;
    height: 15px;
    border-right: 1px solid #696969;
    border-bottom: 1px solid #696969;
    background: #f0f0f0;
    pointer-events: none;
  }

  .drop svg {
    width: 7px;
    height: 4px;
  }

  .group input {
    width: 12px;
    height: 12px;
    margin: 6px 0 0;
    border: 1px solid;
    border-color: #696969 #fff #fff #696969;
    background: #fff;
    appearance: none;
  }

  .pairs {
    display: grid;
    grid-template-columns: 79px 86px;
    gap: 2px 3px;
  }

  .sheet {
    flex: 1;
    overflow: hidden;
    background: #fff;
  }

  table {
    width: 720px;
    border-collapse: separate;
    border-spacing: 0;
    table-layout: fixed;
    font-family: 'Liberation Sans', 'Noto Sans CJK SC', sans-serif;
  }

  .w-row {
    width: 31px;
  }

  .w-std {
    width: 80px;
  }

  .w-c {
    width: 10px;
  }

  .w-d {
    width: 6px;
  }

  .w-f {
    width: 353px;
  }

  th,
  td {
    box-sizing: border-box;
    height: 22px;
    padding: 0 4px 0 2px;
    overflow: hidden;
    line-height: 20px;
    white-space: nowrap;
  }

  th {
    padding: 0;
    border-right: 1px solid #9eb6ce;
    border-bottom: 1px solid #9eb6ce;
    background: #e4ecf7;
    font-weight: 400;
  }

  thead th {
    background: linear-gradient(#f8fafc, #d3dbe9);
  }

  thead .all {
    background: #a9c4e9;
  }

  .all svg {
    width: 9px;
    height: 9px;
    margin: 6px 3px 0 auto;
  }

  thead .sel {
    border-right-color: #f29536;
    border-bottom-color: #000;
    background: linear-gradient(#f9d99f, #f1c15f);
    color: #f00;
  }

  tbody .sel {
    border-right-color: #f29536;
    background: #ffd58d;
  }

  td {
    border-right: 1px solid #d0d7e5;
    border-bottom: 1px solid #d0d7e5;
    background: #c0ffc0;
  }

  td:nth-child(5) {
    padding: 0;
  }

  td div {
    overflow: hidden;
  }

  .mid {
    display: flex;
    justify-content: center;
    margin: 0 3px;
    overflow: hidden;
  }

  .num {
    text-align: right;
  }

  .f {
    padding: 0 3px 0 1px;
    border-left: 2px solid #000;
    border-right: 2px solid #000;
    background: #d5f5dc;
  }

  .first {
    border-top: 1px solid #000;
  }

  .last {
    border-bottom: 2px solid #000;
  }

  .coords {
    color: #808080;
  }

  .blue {
    border-top: 1px solid #4a5e90;
    background: #7a98c2;
  }

  .blue button,
  .blue .thumb {
    border: 1px solid #5a6ea0;
    border-top: none;
    border-radius: 0;
    background: linear-gradient(#f0f4fa, #b8c6dc);
  }

  .blue .thumb {
    width: 54%;
  }

  .side {
    display: flex;
    flex-direction: column;
    align-items: center;
    width: 23px;
    padding: 6px 0 0 2px;
  }

  .side .sep {
    width: 18px;
    height: 1px;
    margin: 2px 0 3px;
  }

  .status {
    position: relative;
    display: flex;
    gap: 3px;
    box-sizing: border-box;
    height: 20px;
    padding: 3px 24px 0 0;
  }

  .ready {
    flex: 1;
    padding-left: 2px;
    line-height: 18px;
  }

  .cell {
    height: 16px;
    padding-left: 1px;
    border-top: 1px solid #a0a0a0;
    border-left: 1px solid #a0a0a0;
    white-space: nowrap;
  }

  .cell:nth-child(2) {
    width: 254px;
  }

  .cell:nth-child(3) {
    width: 270px;
  }

  .cell:nth-child(4) {
    width: 200px;
  }

  .cell:nth-child(5) {
    width: 158px;
  }

  .orb {
    position: absolute;
    left: 14px;
    bottom: 0;
    width: 26px;
    height: 6px;
  }
</style>
